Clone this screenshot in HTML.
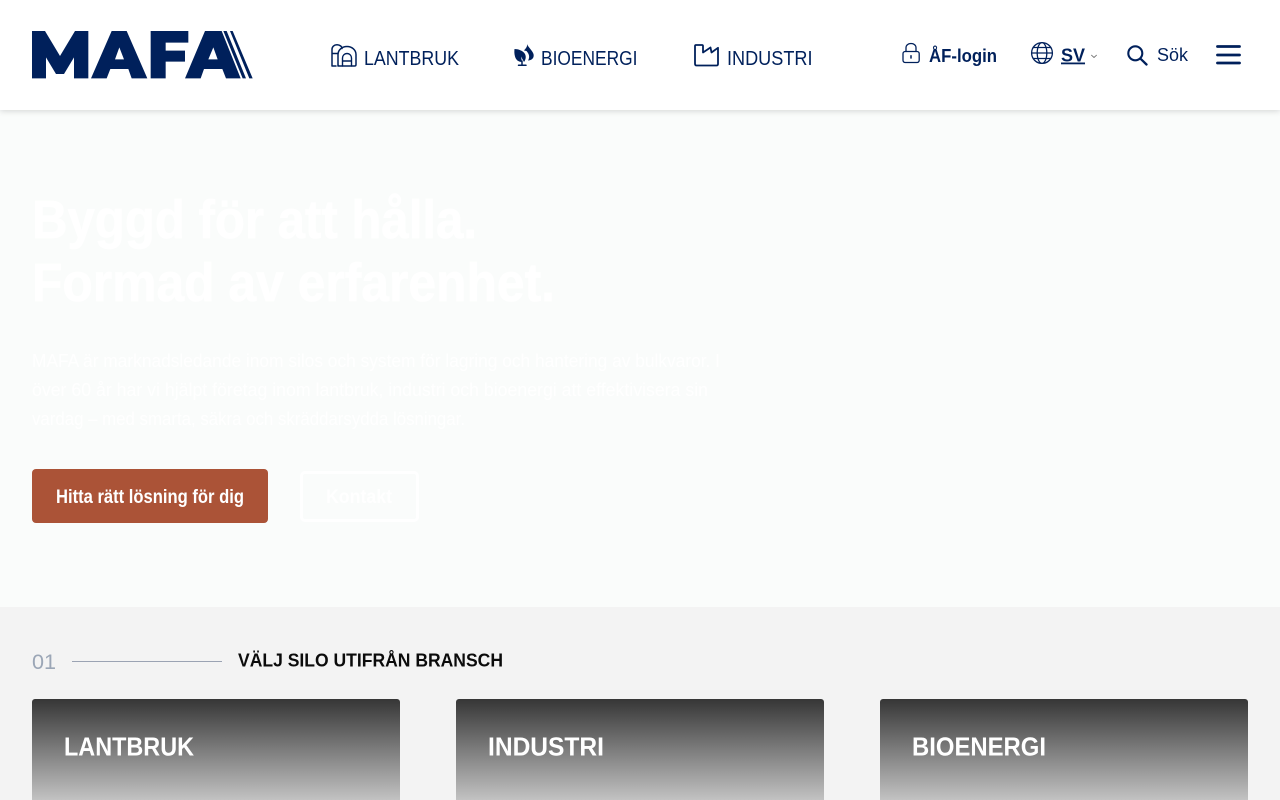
<!DOCTYPE html>
<html lang="sv">
<head>
<meta charset="utf-8">
<title>MAFA</title>
<style>
html,body{margin:0;padding:0;width:1280px;height:800px;overflow:hidden;background:#f3f3f3}
body{position:relative;font-family:"Liberation Sans",sans-serif}
header{position:absolute;left:0;top:0;width:1280px;height:110px;background:#fff;box-shadow:0 1px 6px rgba(0,0,0,.16);z-index:3}
.hero{position:absolute;left:0;top:110px;width:1280px;height:497px;background:#fafcfb}
.btn1{position:absolute;left:32px;top:469px;width:236px;height:54px;background:#ab5337;border-radius:4px}
.btn2{position:absolute;left:300px;top:471px;width:113px;height:45px;border:3px solid #fff;border-radius:5px}
.card{position:absolute;top:699px;width:368px;height:101px;border-radius:3px 3px 0 0;background:linear-gradient(#363636,#c2c2c2)}
svg{position:absolute;left:0;top:0;overflow:visible}
</style>
</head>
<body>
<header>
<svg width="1280" height="110" viewBox="0 0 1280 110" fill="none" font-family="'Liberation Sans',sans-serif">
  <g transform="translate(0 20) scale(.33333)" fill="#00205b">
    <path d="M96 33H135L180 108 225 33H265V175H222V112L192 162H168L138 112V175H96Z"/>
    <path fill-rule="evenodd" d="M273 175L335 33H380L442 175H395L385 147H331L320 175ZM345 118H372L358 82Z"/>
    <path d="M452 33H565V68H497V92H555V125H497V175H452Z"/>
    <path fill-rule="evenodd" d="M555 175L615 33H665L722 175H678L667 147H612L602 175ZM625 118H653L640 82Z"/>
    <path d="M670 33H680L738 175H728ZM690 33H698L758 175H748Z"/>
  </g>
  <g stroke="#00205b" stroke-width="1.5" stroke-linecap="round" stroke-linejoin="round">
    <path d="M332 66V49.500C332 46.500 334.200 44.800 337 44.800S342 46.500 342 48.500M332 53.500H338M332 66H336"/>
    <path d="M338 66V54.500C338 50 342 46.500 347 46.500S356 50 356 54.500V64.500C356 65.500 355.500 66 354.500 66H339.500C338.500 66 338 65.500 338 64.500Z"/>
    <path d="M342.500 66V58C342.500 55.500 344.500 53.500 347 53.500S351.500 55.500 351.500 58V66M342.500 61H351.500" stroke-width="1.4"/>
    <path d="M695 63.500V46C695 45.300 695.300 45 696 45H702C702.700 45 703 45.300 703 46V52.500L710.500 47.500 711.500 52.500 718 47.800V64C718 65 717.500 65.500 716.500 65.500H696.500C695.500 65.500 695 65 695 63.500Z" stroke-width="1.8"/>
    <rect x="903" y="51.500" width="16.200" height="11" rx="2.200" stroke-width="1.300"/>
    <path d="M906 51.500V47.800C906 45 908.300 43.500 911 43.500S916 45 916 47.800V51.500" stroke-width="1.300"/>
    <path d="M911 55.800V58" stroke-width="1.500"/>
    <g stroke-width="1.300">
      <circle cx="1042" cy="53" r="10.400"/>
      <ellipse cx="1042" cy="53" rx="4.800" ry="10.400"/>
      <path d="M1031.600 53H1052.400M1033.200 47.500H1050.800M1033.200 58.500H1050.800"/>
    </g>
    <path d="M1091.500 55.200L1094 57.500 1096.500 55.200" stroke-width=".9" stroke="#777"/>
    <circle cx="1135.300" cy="53.300" r="7" stroke-width="2.100"/>
    <path d="M1140.500 58.700L1146.500 64.500" stroke-width="2.300"/>
  </g>
  <path fill="#00205b" d="M514.500 49C518 49 523 50.500 525 54 526.500 57 525.500 60 524 62L521 56.500 522 62C518.500 62 516 60 515 56.500 514.300 54 514.200 51.500 514.500 49ZM527 44C528 47 532 50 533.500 54 534.500 58 531.500 60.500 528 60.500 529.500 58 529.500 55.500 528 53L526.500 51 524 50.500C525.500 48.500 527.500 47 527 44Z"/>
  <path stroke="#00205b" stroke-width="1.500" stroke-linecap="round" d="M522 61V65M518.500 65.200H526"/>
  <g fill="#00205b" font-size="20">
    <text x="364" y="65" textLength="95" lengthAdjust="spacingAndGlyphs">LANTBRUK</text>
    <text x="541" y="65" textLength="96.500" lengthAdjust="spacingAndGlyphs">BIOENERGI</text>
    <text x="727" y="65" textLength="85.500" lengthAdjust="spacingAndGlyphs">INDUSTRI</text>
    <text x="929" y="62" font-size="18" font-weight="700" textLength="68" lengthAdjust="spacingAndGlyphs">ÅF-login</text>
    <text x="1061" y="61.500" font-size="18" font-weight="700" text-decoration="underline">SV</text>
    <text x="1157" y="61" font-size="18.500" textLength="31" lengthAdjust="spacingAndGlyphs">Sök</text>
  </g>
  <path stroke="#00205b" stroke-width="2.800" stroke-linecap="round" d="M1217.500 46.500H1239.500M1217.500 55H1239.500M1217.500 63H1239.500"/>
</svg>
</header>
<section class="hero"></section>
<div class="btn1"></div>
<div class="btn2"></div>
<div class="card" style="left:32px"></div>
<div class="card" style="left:456px"></div>
<div class="card" style="left:880px"></div>
<svg width="1280" height="800" viewBox="0 0 1280 800" style="z-index:2" font-family="'Liberation Sans',sans-serif">
  <g fill="#fff" stroke="#fff" stroke-width=".7" font-weight="700" font-size="54">
    <text x="32" y="238" textLength="445" lengthAdjust="spacingAndGlyphs">Byggd för att hålla.</text>
    <text x="32" y="301" textLength="523" lengthAdjust="spacingAndGlyphs">Formad av erfarenhet.</text>
  </g>
  <g fill="#fff" font-size="18.500">
    <text x="32" y="367" textLength="688" lengthAdjust="spacingAndGlyphs">MAFA är marknadsledande inom silos och system för lagring och hantering av bulkvaror. I</text>
    <text x="32" y="396" textLength="676" lengthAdjust="spacingAndGlyphs">över 60 år har vi hjälpt företag inom lantbruk, industri och bioenergi att effektivisera sin</text>
    <text x="32" y="425" textLength="433" lengthAdjust="spacingAndGlyphs">vardag – med smarta, säkra och skräddarsydda lösningar.</text>
  </g>
  <g fill="#fff" font-weight="700" font-size="19">
    <text x="56" y="503" textLength="188" lengthAdjust="spacingAndGlyphs">Hitta rätt lösning för dig</text>
    <text x="326" y="503" textLength="66" lengthAdjust="spacingAndGlyphs">Kontakt</text>
  </g>
  <text x="32" y="669" fill="#9ba6b6" font-size="21" textLength="24" lengthAdjust="spacingAndGlyphs">01</text>
  <path d="M72 661.500H222" stroke="#9ba3b3" stroke-width="1"/>
  <text x="238" y="666.500" fill="#0b0b0b" font-size="18.500" font-weight="700" textLength="265" lengthAdjust="spacingAndGlyphs">VÄLJ SILO UTIFRÅN BRANSCH</text>
  <g fill="#fff" font-size="26" font-weight="700">
    <text x="64" y="755.500" textLength="130" lengthAdjust="spacingAndGlyphs">LANTBRUK</text>
    <text x="488" y="755.500" textLength="116" lengthAdjust="spacingAndGlyphs">INDUSTRI</text>
    <text x="912" y="755.500" textLength="134" lengthAdjust="spacingAndGlyphs">BIOENERGI</text>
  </g>
</svg>
</body>
</html>
